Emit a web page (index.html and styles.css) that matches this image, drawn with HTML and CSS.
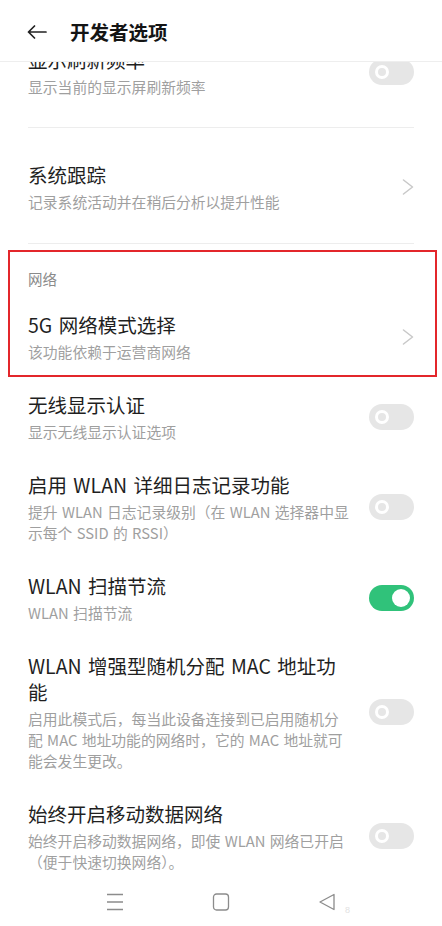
FILE: index.html
```html
<!DOCTYPE html>
<html lang="zh-CN">
<head>
<meta charset="utf-8">
<title>开发者选项</title>
<link rel="stylesheet" href="styles.css">
</head>
<body>
<div class="app">
  <header class="topbar">
    <svg class="back" viewBox="0 0 20 14" width="20" height="14"><path d="M1.5 7H19M7.5 1L1.5 7L7.5 13" fill="none" stroke="#222" stroke-width="1.7" stroke-linecap="round" stroke-linejoin="round"/></svg>
    <h1 class="title">开发者选项</h1>
  </header>
  <main class="content">
    <div class="list">
      <div class="row row-refresh">
        <div class="text">
          <div class="t">显示刷新频率</div>
          <div class="s">显示当前的显示屏刷新频率</div>
        </div>
        <span class="switch"><span class="knob"></span></span>
      </div>
      <div class="divider"></div>
      <div class="row row-trace">
        <div class="text">
          <div class="t">系统跟踪</div>
          <div class="s">记录系统活动并在稍后分析以提升性能</div>
        </div>
        <svg class="chev" viewBox="0 0 12 16" width="12" height="16"><path d="M1.5 1L10.5 8L1.5 15" fill="none" stroke="#c8c8c8" stroke-width="1.5" stroke-linecap="round" stroke-linejoin="round"/></svg>
      </div>
      <div class="divider divider-last"></div>
      <section class="highlight">
        <div class="cat">网络</div>
        <div class="row row-boxed">
          <div class="text">
            <div class="t">5G 网络模式选择</div>
            <div class="s">该功能依赖于运营商网络</div>
          </div>
          <svg class="chev" viewBox="0 0 12 16" width="12" height="16"><path d="M1.5 1L10.5 8L1.5 15" fill="none" stroke="#c8c8c8" stroke-width="1.5" stroke-linecap="round" stroke-linejoin="round"/></svg>
        </div>
      </section>
      <div class="row">
        <div class="text">
          <div class="t">无线显示认证</div>
          <div class="s">显示无线显示认证选项</div>
        </div>
        <span class="switch"><span class="knob"></span></span>
      </div>
      <div class="row">
        <div class="text">
          <div class="t">启用 WLAN 详细日志记录功能</div>
          <div class="s">提升 WLAN 日志记录级别（在 WLAN 选择器中显示每个 SSID 的 RSSI）</div>
        </div>
        <span class="switch"><span class="knob"></span></span>
      </div>
      <div class="row">
        <div class="text">
          <div class="t">WLAN 扫描节流</div>
          <div class="s">WLAN 扫描节流</div>
        </div>
        <span class="switch on"><span class="knob"></span></span>
      </div>
      <div class="row">
        <div class="text">
          <div class="t">WLAN 增强型随机分配 MAC 地址功能</div>
          <div class="s">启用此模式后，每当此设备连接到已启用随机分配 MAC 地址功能的网络时，它的 MAC 地址就可能会发生更改。</div>
        </div>
        <span class="switch"><span class="knob"></span></span>
      </div>
      <div class="row">
        <div class="text">
          <div class="t">始终开启移动数据网络</div>
          <div class="s">始终开启移动数据网络，即使 WLAN 网络已开启（便于快速切换网络）。</div>
        </div>
        <span class="switch"><span class="knob"></span></span>
      </div>
    </div>
  </main>
  <nav class="navbar">
    <div class="navcell">
      <svg viewBox="0 0 18 18" width="18" height="18"><path d="M1 1.5H17M1 9H17M1 16.5H17" fill="none" stroke="#8c8c8c" stroke-width="1.3"/></svg>
    </div>
    <div class="navcell">
      <svg viewBox="0 0 18 18" width="18" height="18"><rect x="1.5" y="1" width="15" height="16" rx="3" fill="none" stroke="#8c8c8c" stroke-width="1.3"/></svg>
    </div>
    <div class="navcell navcell-back">
      <svg viewBox="0 0 18 18" width="18" height="18"><path d="M16 1.5L2 9L16 16.5Z" fill="none" stroke="#8c8c8c" stroke-width="1.3" stroke-linejoin="round"/></svg>
      <span class="tiny">8</span>
    </div>
  </nav>
</div>
</body>
</html>
```
FILE: styles.css
```css
* { box-sizing: border-box; }
html, body { margin: 0; padding: 0; background: #fff; }
body {
  font-family: "Noto Sans CJK SC", "Noto Sans", sans-serif;
  color: #1f1f1f;
}
.app {
  width: 442px;
  height: 926px;
  display: flex;
  flex-direction: column;
  overflow: hidden;
  background: #fff;
}
.topbar {
  height: 62px;
  flex: 0 0 62px;
  display: flex;
  align-items: center;
  padding: 2px 0 0 27px;
  border-bottom: 1px solid #eeeeee;
  background: #fff;
  position: relative;
  z-index: 2;
}
.back { display: block; flex: 0 0 auto; }
.title {
  margin: 0 0 0 23px;
  font-size: 19.5px;
  font-weight: 700;
  line-height: 26px;
  color: #141414;
}
.content {
  flex: 1;
  overflow: hidden;
}
.list { margin-top: -30px; }
.row {
  display: flex;
  align-items: center;
  gap: 16px;
  padding: 15px 28px;
}
.text { flex: 1; min-width: 0; }
.t {
  font-size: 19.5px;
  line-height: 26px;
  color: #1f1f1f;
  word-spacing: 2px;
}
.s {
  margin-top: 3px;
  font-size: 14.8px;
  line-height: 21px;
  color: #9f9f9f;
  word-spacing: 1px;
}
.row-refresh { padding-bottom: 29.5px; }
.row-trace { padding-top: 34px; padding-bottom: 31px; }
.divider {
  height: 1px;
  margin: 0 28px;
  background: #ededed;
}
.divider-last { margin-bottom: 6px; }
.highlight {
  margin: 0 5px 0 8px;
  border: 2px solid #e3262b;
}
.cat {
  padding: 17px 18px 8px;
  font-size: 14.5px;
  line-height: 20px;
  color: #8a8a8a;
}
.row-boxed { padding: 15px 21px 13px 18px; }
.chev { display: block; flex: 0 0 auto; }
.switch {
  flex: 0 0 auto;
  width: 45px;
  height: 26px;
  border-radius: 13px;
  background: #e6e6e6;
  display: flex;
  align-items: center;
  justify-content: flex-start;
  padding: 0 6px;
}
.knob {
  width: 14px;
  height: 14px;
  border-radius: 50%;
  border: 3px solid #fff;
}
.switch.on {
  background: #30c27a;
  justify-content: flex-end;
  padding: 0 4px;
}
.switch.on .knob {
  width: 18px;
  height: 18px;
  border: none;
  background: #fff;
}
.navbar {
  flex: 0 0 48px;
  height: 48px;
  display: flex;
  justify-content: center;
  align-items: center;
  background: #fff;
}
.navcell {
  width: 106px;
  display: flex;
  justify-content: center;
  align-items: center;
}
.navcell svg { display: block; }
.navcell-back { position: relative; }
.tiny {
  position: absolute;
  left: 71px;
  top: 12px;
  font-size: 9px;
  line-height: 10px;
  color: #e2e2e2;
  font-family: "Liberation Sans", sans-serif;
}
```
